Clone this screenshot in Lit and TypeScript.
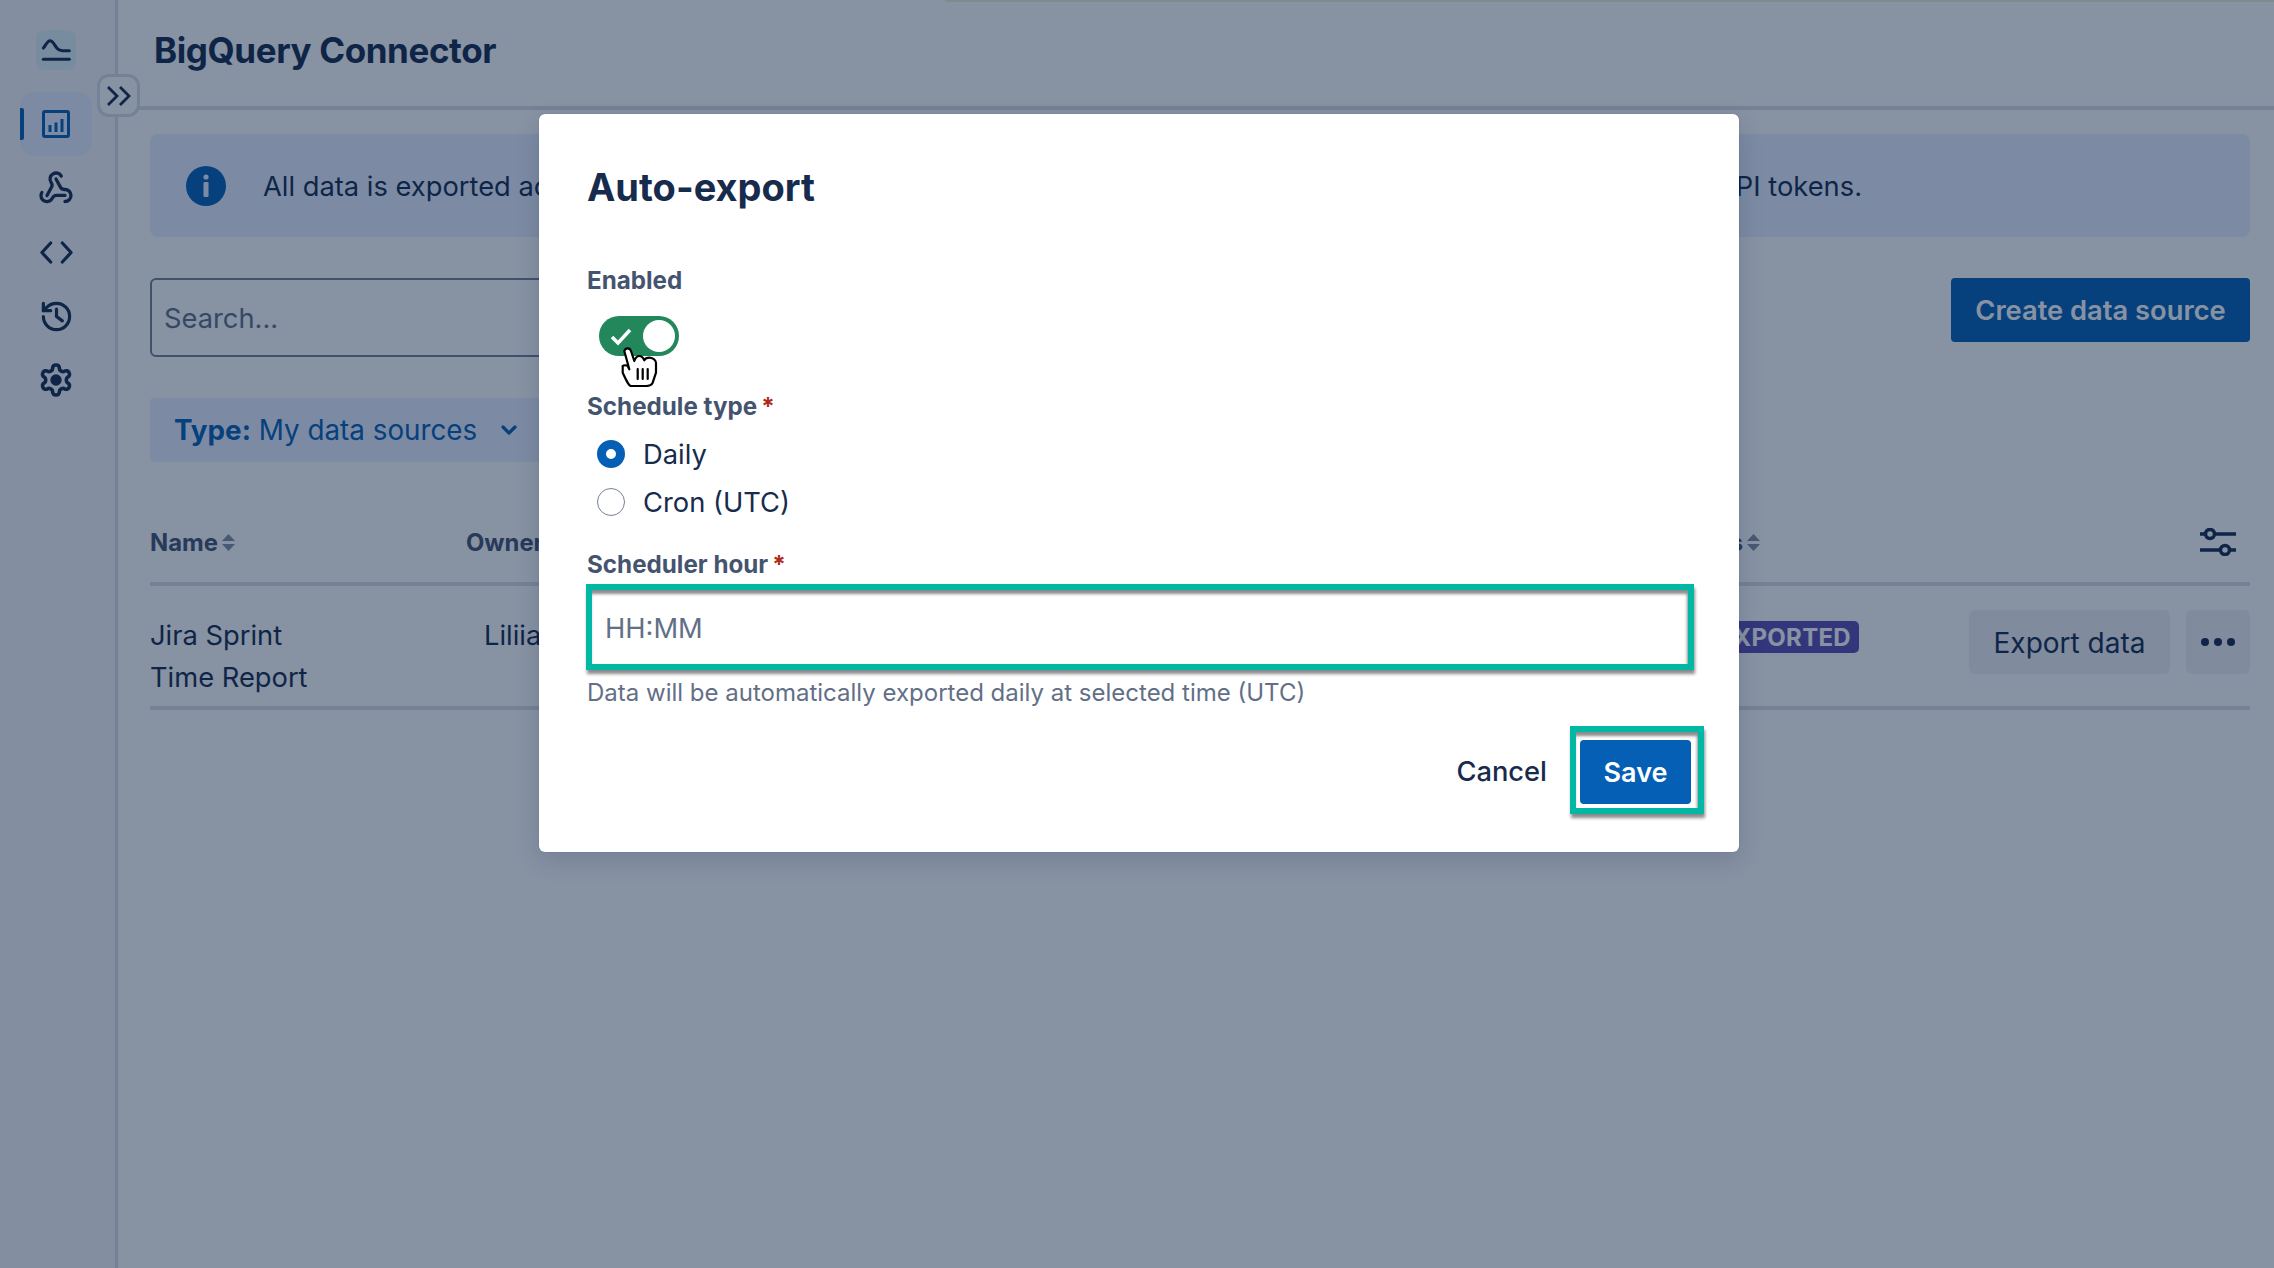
import { LitElement, html, css, svg } from 'lit';
import { customElement } from 'lit/decorators.js';

const icon = (body: unknown, size = 32, width = 2.2) => html`
  <svg width=${size} height=${size} viewBox="0 0 24 24" fill="none" stroke="currentColor"
    stroke-width=${width} stroke-linecap="round" stroke-linejoin="round">${body}</svg>`;

const webhook = svg`
  <path d="M18 16.98h-5.99c-1.1 0-1.95.94-2.48 1.9A4 4 0 0 1 2 17c.01-.7.2-1.4.57-2" />
  <path d="m6 17 3.13-5.78c.53-.97.1-2.18-.5-3.1a4 4 0 1 1 6.89-4.06" />
  <path d="m12 6 3.13 5.73C15.66 12.7 16.9 13 18 13a4 4 0 0 1 0 8" />`;
const code = svg`<path d="M8 5.500 2 12l6 6.500" /><path d="m16 5.500 6 6.500-6 6.500" />`;
const history = svg`
  <path d="M3 12a9 9 0 1 0 9-9 9.75 9.75 0 0 0-6.74 2.74L3 8" />
  <path d="M3 3v5h5" /><path d="M12 7v5l4 3" />`;
const gear = svg`
  <path d="M12.22 2h-.44a2 2 0 0 0-2 2v.18a2 2 0 0 1-1 1.73l-.43.25a2 2 0 0 1-2 0l-.15-.08a2 2 0 0 0-2.73.73l-.22.38a2 2 0 0 0 .73 2.73l.15.1a2 2 0 0 1 1 1.72v.51a2 2 0 0 1-1 1.74l-.15.09a2 2 0 0 0-.73 2.73l.22.38a2 2 0 0 0 2.73.73l.15-.08a2 2 0 0 1 2 0l.43.25a2 2 0 0 1 1 1.73V20a2 2 0 0 0 2 2h.44a2 2 0 0 0 2-2v-.18a2 2 0 0 1 1-1.73l.43-.25a2 2 0 0 1 2 0l.15.08a2 2 0 0 0 2.73-.73l.22-.39a2 2 0 0 0-.73-2.73l-.15-.08a2 2 0 0 1-1-1.74v-.5a2 2 0 0 1 1-1.74l.15-.09a2 2 0 0 0 .73-2.73l-.22-.38a2 2 0 0 0-2.73-.73l-.15.08a2 2 0 0 1-2 0l-.43-.25a2 2 0 0 1-1-1.73V4a2 2 0 0 0-2-2z" />
  <circle cx="12" cy="12" r="3.800" fill="currentColor" stroke="none" />`;

const sortIcon = html`
  <svg class="sort" width="13" height="17" viewBox="0 0 13 17"><path d="M6.5 0 13 7H0z M0 10h13l-6.5 7z" /></svg>`;

@customElement('app-root')
export class AppRoot extends LitElement {
  static styles = css`
    :host {
      display: block;
      position: relative;
      width: 100%;
      height: 1268px;
      overflow: hidden;
      background: #fff;
      color: #172b4d;
      font-family: Inter, 'Noto Sans', sans-serif;
      font-size: 27.3px;
    }
    .page { display: flex; height: 1268px; }

    .side {
      flex: none;
      width: 95px;
      padding: 30px 0 0 20px;
      background: #f7f8f9;
      border-right: 3px solid #dcdfe4;
    }
    .logo {
      width: 40px;
      height: 40px;
      margin: 0 0 22px 16px;
      border-radius: 7px;
      background: #e0f5f8;
      display: flex;
      align-items: center;
      justify-content: center;
    }
    .nav {
      width: 72px;
      height: 64px;
      display: flex;
      align-items: center;
      justify-content: center;
      color: #172b4d;
    }
    .nav.active {
      position: relative;
      background: #e9f2ff;
      border-radius: 14px;
      color: #0560b5;
    }
    .nav.active::before {
      content: '';
      position: absolute;
      left: 0;
      top: 16px;
      width: 4px;
      height: 32px;
      background: #0560b5;
      border-radius: 0 2px 2px 0;
    }
    .expand {
      position: absolute;
      left: 97px;
      top: 74px;
      width: 43px;
      height: 43px;
      box-sizing: border-box;
      border: 3px solid #dcdfe4;
      border-radius: 12px;
      background: #fff;
      display: flex;
      align-items: center;
      justify-content: center;
      color: #172b4d;
    }

    .main { flex: 1; min-width: 0; }
    .head {
      height: 100px;
      padding: 0 0 6px 36px;
      border-bottom: 4px solid #dcdfe4;
      display: flex;
      align-items: center;
    }
    h1 { margin: 0; font-size: 35px; line-height: 44px; font-weight: 700; letter-spacing: -0.4px; }
    .body { padding: 24px 24px 0 32px; }

    .banner {
      height: 103px;
      background: #e9f2ff;
      border-radius: 8px;
      display: flex;
      align-items: center;
      padding-left: 36px;
      gap: 37px;
    }
    .info {
      flex: none;
      width: 40px;
      height: 40px;
      border-radius: 50%;
      background: #0560b5;
      display: flex;
      align-items: center;
      justify-content: center;
    }
    .msg { width: 1599px; padding-top: 2px; display: flex; justify-content: space-between; white-space: nowrap; }

    .tools { display: flex; justify-content: space-between; align-items: flex-start; margin-top: 41px; }
    .search {
      width: 760px;
      height: 79px;
      box-sizing: border-box;
      border: 2px solid #758195;
      border-radius: 6px;
      padding: 2px 0 0 12px;
      display: flex;
      align-items: center;
      color: #626f86;
    }
    .create {
      width: 299px;
      height: 64px;
      border: none;
      border-radius: 4px;
      background: #0560b5;
      color: #fff;
      font: 600 27.3px Inter, sans-serif;
    }

    .filter {
      margin-top: 41px;
      width: 480px;
      height: 64px;
      box-sizing: border-box;
      padding-left: 24px;
      display: flex;
      align-items: center;
      gap: 20px;
      background: #e9f2ff;
      border-radius: 4px;
      color: #0560b5;
      font-size: 27.8px;
    }
    .filter b { font-weight: 700; }

    .grid { display: grid; grid-template-columns: 316px 1202px 301px 281px; }
    .thead {
      height: 80px;
      margin-top: 40px;
      border-bottom: 4px solid #dcdfe4;
      align-items: center;
      font-size: 23.8px;
      font-weight: 700;
      color: #44546f;
    }
    .th { display: flex; align-items: center; gap: 4px; padding-top: 1px; }
    .sort { fill: #8590a2; }
    .cfg { justify-self: end; margin-right: 14px; color: #172b4d; display: flex; }
    .row {
      height: 120px;
      border-bottom: 4px solid #dcdfe4;
      align-items: start;
      line-height: 42px;
    }
    .name { padding-top: 29px; }
    .owner { padding: 29px 0 0 18px; }
    .badge {
      justify-self: end;
      margin: 35px 110px 0 0;
      height: 32px;
      padding: 0 8px;
      border-radius: 5px;
      background: #5e4db2;
      color: #fff;
      font-size: 24px;
      font-weight: 700;
      letter-spacing: 0.3px;
      line-height: 33px;
    }
    .acts { display: flex; justify-content: flex-end; gap: 16px; margin-top: 24px; }
    .btn {
      height: 64px;
      border-radius: 6px;
      background: #f1f2f4;
      display: flex;
      align-items: center;
      justify-content: center;
    }
    .btn.export { width: 201px; font-size: 28px; padding-top: 1px; box-sizing: border-box; }
    .btn.more { width: 64px; gap: 5px; }
    .dot { width: 8px; height: 8px; border-radius: 50%; background: #172b4d; }

    .scrim {
      position: absolute;
      inset: 0;
      background: rgba(9, 30, 66, 0.485);
      display: flex;
      justify-content: center;
      align-items: flex-start;
      padding: 114px 0 0 4px;
      box-sizing: border-box;
    }
    .topline {
      position: absolute;
      top: 0;
      left: 945px;
      right: 0;
      height: 2px;
      background: #7e8a8c;
    }
    .modal {
      position: relative;
      width: 1200px;
      box-sizing: border-box;
      padding: 49px 45px 38px 48px;
      background: #fff;
      border-radius: 6px;
      box-shadow: 0 8px 24px rgba(9, 30, 66, 0.15), 0 0 1px rgba(9, 30, 66, 0.31);
    }
    h2 { margin: 0 0 54px; font-size: 38px; line-height: 48px; font-weight: 700; }
    .label { font-size: 24.2px; line-height: 32px; font-weight: 700; color: #44546f; }
    .req { color: #ae2a19; margin-left: 4px; }
    .toggle {
      position: relative;
      width: 80px;
      height: 40px;
      margin: 19px 0 35px 12px;
      border-radius: 20px;
      background: #22875a;
    }
    .knob {
      position: absolute;
      right: 4px;
      top: 4px;
      width: 32px;
      height: 32px;
      border-radius: 50%;
      background: #fff;
    }
    .tick { position: absolute; left: 10px; top: 8px; color: #fff; }
    .hand { position: absolute; left: 81px; top: 233px; }
    .radios { margin: 7px 0 23px 10px; }
    .radio { height: 48px; display: flex; align-items: center; gap: 18px; }
    .dotr {
      flex: none;
      width: 28px;
      height: 28px;
      box-sizing: border-box;
      border-radius: 50%;
      border: 1.5px solid #758195;
    }
    .dotr.on { border: 9.5px solid #0560b5; background: #fff; }
    .input {
      margin: 3px 0 7px -1px;
      height: 86px;
      box-sizing: border-box;
      border: 6px solid #00b8a3;
      box-shadow: 1px 4px 3px rgba(0, 0, 0, 0.45), inset -1px 4px 3px rgba(0, 0, 0, 0.45);
      padding: 2px 0 0 13px;
      display: flex;
      align-items: center;
      color: #626f86;
    }
    .help { font-size: 24px; line-height: 32px; color: #626f86; }
    .foot { display: flex; justify-content: flex-end; align-items: center; gap: 23px; margin: 17px -10px 0 0; }
    .cancel { font-weight: 500; padding-top: 3px; }
    .frame {
      border: 6px solid #00b8a3;
      box-shadow: 1px 4px 3px rgba(0, 0, 0, 0.45), inset -1px 4px 3px rgba(0, 0, 0, 0.45);
      padding: 8px 7px 4px 4px;
    }
    .save {
      width: 111px;
      height: 64px;
      border-radius: 4px;
      background: #0560b5;
      color: #fff;
      font-size: 27px;
      font-weight: 600;
      display: flex;
      align-items: center;
      justify-content: center;
    }
  `;

  render() {
    return html`
      <div class="page">
        <aside class="side">
          <div class="logo">
            ${icon(svg`<path d="M2.500 10.500C4 9 5.500 5 7.500 5 10 5 11 9 13 11c1 1 2 1.500 4 1.500h5" /><path d="M2.500 19H22" />`, 32, 2.3)}
          </div>
          <div class="nav active">
            <svg width="28" height="28" viewBox="0 0 28 28" fill="none">
              <rect x="1.500" y="1.500" width="25" height="25" rx="1.500" stroke="currentColor" stroke-width="3" />
              <path d="M8 15v7M14 12.500V22M20 9v13" stroke="currentColor" stroke-width="3" />
            </svg>
          </div>
          <div class="nav">${icon(webhook, 36)}</div>
          <div class="nav">${icon(code, 35)}</div>
          <div class="nav">${icon(history, 35)}</div>
          <div class="nav">${icon(gear, 36, 2.4)}</div>
        </aside>
        <main class="main">
          <header class="head"><h1>BigQuery Connector</h1></header>
          <div class="body">
            <div class="banner">
              <div class="info">
                <svg width="8" height="24" viewBox="0 0 8 24" fill="#e9f2ff">
                  <circle cx="4" cy="3" r="2.600" /><rect x="1.500" y="8" width="5" height="15" rx="1" />
                </svg>
              </div>
              <div class="msg"><span>All data is exported according to your permissions.</span><span>Manage access with API tokens.</span></div>
            </div>
            <div class="tools">
              <div class="search">Search...</div>
              <button class="create">Create data source</button>
            </div>
            <div class="filter">
              <span><b>Type:</b> My data sources</span>
              ${icon(svg`<path d="m6 9 6 6 6-6" />`, 24, 3.2)}
            </div>
            <div class="grid thead">
              <div class="th">Name ${sortIcon}</div>
              <div class="th">Owner</div>
              <div class="th">Status ${sortIcon}</div>
              <div class="cfg">
                <svg width="36" height="28" viewBox="0 0 36 28" fill="none" stroke="currentColor" stroke-width="3.500">
                  <path d="M0 6h6M16 6h20M0 22h20M30 22h6" />
                  <circle cx="10" cy="6" r="4.500" /><circle cx="25" cy="22" r="4.500" />
                </svg>
              </div>
            </div>
            <div class="grid row">
              <div class="name">Jira Sprint<br />Time Report</div>
              <div class="owner">Liliia</div>
              <div class="badge">EXPORTED</div>
              <div class="acts">
                <div class="btn export">Export data</div>
                <div class="btn more"><i class="dot"></i><i class="dot"></i><i class="dot"></i></div>
              </div>
            </div>
          </div>
        </main>
      </div>
      <div class="expand">
        <svg width="26" height="22" viewBox="0 0 26 22" fill="none" stroke="currentColor" stroke-width="2.800">
          <path d="m2 2 9 9-9 9M14 2l9 9-9 9" />
        </svg>
      </div>

      <div class="scrim">
        <div class="topline"></div>
        <section class="modal">
          <h2>Auto-export</h2>
          <div class="label">Enabled</div>
          <div class="toggle">
            <svg class="tick" width="24" height="24" viewBox="0 0 24 24" fill="none" stroke="currentColor" stroke-width="3.500">
              <path d="m3 13 6 6 12-13" />
            </svg>
            <div class="knob"></div>
          </div>
          <div class="label">Schedule type<span class="req">*</span></div>
          <div class="radios">
            <div class="radio"><span class="dotr on"></span>Daily</div>
            <div class="radio"><span class="dotr"></span>Cron (UTC)</div>
          </div>
          <div class="label">Scheduler hour<span class="req">*</span></div>
          <div class="input">HH:MM</div>
          <div class="help">Data will be automatically exported daily at selected time (UTC)</div>
          <div class="foot">
            <span class="cancel">Cancel</span>
            <div class="frame"><div class="save">Save</div></div>
          </div>
          <svg class="hand" width="38" height="40" viewBox="-1 -1 38 40" fill="#fff" stroke="#000" stroke-width="2.200" stroke-linejoin="round" stroke-linecap="round">
            <path d="M3.300 3C4 1 5.500 .3 6.700 .3 8.500 .3 9.500 1.500 10 3l3.300 10c1-3 3-5 5-5 2.500 0 4 2 5 4.300 1-2 2.500-2.600 5-2.600 3 0 6.700 2 6.700 5v10l-3.300 10c-1 2-3 3.300-6.700 3.300H10C8 38 6 34 1.700 24.700V18c1-1 4-1 5 0l1.600 3.300z" />
            <path d="M16.700 21v10M21.700 21v10M26.700 21v10" fill="none" />
          </svg>
        </section>
      </div>
    `;
  }
}
